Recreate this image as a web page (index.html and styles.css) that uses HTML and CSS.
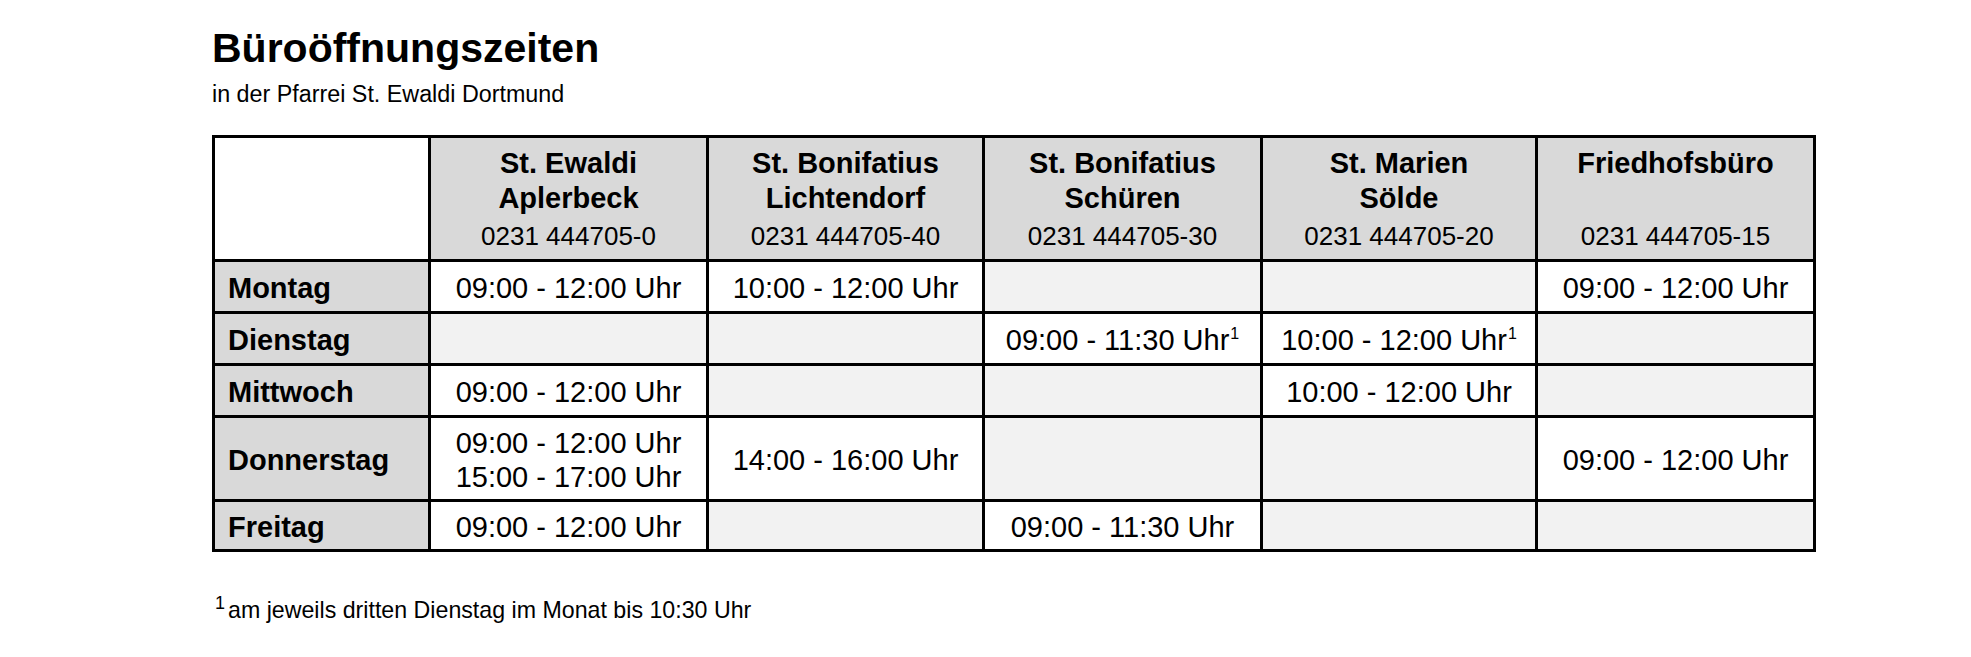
FILE: index.html
```html
<!DOCTYPE html>
<html lang="de">
<head>
<meta charset="utf-8">
<title>Büroöffnungszeiten</title>
<link rel="stylesheet" href="styles.css">
</head>
<body>
<main class="page">
  <h1 class="title">Büroöffnungszeiten</h1>
  <p class="subtitle">in der Pfarrei St. Ewaldi Dortmund</p>

  <table class="hours">
    <colgroup>
      <col class="c-day">
      <col class="c-1">
      <col class="c-2">
      <col class="c-3">
      <col class="c-4">
      <col class="c-5">
    </colgroup>
    <thead>
      <tr class="r-head">
        <th class="corner"></th>
        <th><div class="name">St. Ewaldi<br>Aplerbeck</div><div class="phone">0231 444705-0</div></th>
        <th><div class="name">St. Bonifatius<br>Lichtendorf</div><div class="phone">0231 444705-40</div></th>
        <th><div class="name">St. Bonifatius<br>Schüren</div><div class="phone">0231 444705-30</div></th>
        <th><div class="name">St. Marien<br>Sölde</div><div class="phone">0231 444705-20</div></th>
        <th><div class="name">Friedhofsbüro</div><div class="phone">0231 444705-15</div></th>
      </tr>
    </thead>
    <tbody>
      <tr class="r-std">
        <th class="day">Montag</th>
        <td class="open">09:00 - 12:00 Uhr</td>
        <td class="open">10:00 - 12:00 Uhr</td>
        <td class="closed"></td>
        <td class="closed"></td>
        <td class="open">09:00 - 12:00 Uhr</td>
      </tr>
      <tr class="r-std">
        <th class="day">Dienstag</th>
        <td class="closed"></td>
        <td class="closed"></td>
        <td class="open">09:00 - 11:30 Uhr<sup class="note">1</sup></td>
        <td class="open">10:00 - 12:00 Uhr<sup class="note">1</sup></td>
        <td class="closed"></td>
      </tr>
      <tr class="r-std">
        <th class="day">Mittwoch</th>
        <td class="open">09:00 - 12:00 Uhr</td>
        <td class="closed"></td>
        <td class="closed"></td>
        <td class="open">10:00 - 12:00 Uhr</td>
        <td class="closed"></td>
      </tr>
      <tr class="r-tall">
        <th class="day">Donnerstag</th>
        <td class="open">09:00 - 12:00 Uhr<br>15:00 - 17:00 Uhr</td>
        <td class="open">14:00 - 16:00 Uhr</td>
        <td class="closed"></td>
        <td class="closed"></td>
        <td class="open">09:00 - 12:00 Uhr</td>
      </tr>
      <tr class="r-last">
        <th class="day">Freitag</th>
        <td class="open">09:00 - 12:00 Uhr</td>
        <td class="closed"></td>
        <td class="open">09:00 - 11:30 Uhr</td>
        <td class="closed"></td>
        <td class="closed"></td>
      </tr>
    </tbody>
  </table>

  <p class="footnote"><sup class="fn-mark">1</sup>am jeweils dritten Dienstag im Monat bis 10:30 Uhr</p>
</main>
</body>
</html>
```

FILE: styles.css
```css
* {
  box-sizing: border-box;
}

html, body {
  margin: 0;
  padding: 0;
  background: #ffffff;
}

body {
  font-family: "Liberation Sans", Arial, Helvetica, sans-serif;
  color: #000000;
}

.page {
  padding: 25px 0 0 212px;
}

.title {
  margin: 0;
  font-size: 41px;
  line-height: 47px;
  font-weight: bold;
}

.subtitle {
  margin: 9px 0 0 0;
  font-size: 23.3px;
  line-height: 26px;
}

.hours {
  margin-top: 28px;
  width: 1604px;
  table-layout: fixed;
  border-collapse: separate;
  border-spacing: 0;
  border-top: 3px solid #000;
  border-left: 3px solid #000;
}

.c-day { width: 216px; }
.c-1 { width: 278px; }
.c-2 { width: 276px; }
.c-3 { width: 278px; }
.c-4 { width: 275px; }
.c-5 { width: 278px; }

.hours th,
.hours td {
  border-right: 3px solid #000;
  border-bottom: 3px solid #000;
  padding: 0;
  font-size: 29px;
  line-height: 34px;
}

.r-head th {
  height: 124px;
  background: #d9d9d9;
  vertical-align: top;
  text-align: center;
  padding-top: 8px;
  font-weight: bold;
}

.r-head th.corner {
  background: #ffffff;
}

.name {
  min-height: 70px;
  line-height: 35px;
}

.phone {
  font-weight: normal;
  font-size: 26px;
  line-height: 40px;
}

.r-std th,
.r-std td {
  height: 52px;
}

.r-tall th,
.r-tall td {
  height: 84px;
}

.r-last th,
.r-last td {
  height: 50px;
}

.hours td {
  text-align: center;
  vertical-align: middle;
  padding-top: 3px;
}

.hours th.day {
  background: #d9d9d9;
  text-align: left;
  vertical-align: middle;
  padding-left: 13px;
  padding-top: 3px;
  font-weight: bold;
}

.open {
  background: #ffffff;
}

.closed {
  background: #f2f2f2;
}

.note {
  font-size: 16px;
  line-height: 0;
  vertical-align: 11px;
  margin-left: 1px;
}

.footnote {
  margin: 44px 0 0 3px;
  font-size: 23.2px;
  line-height: 28px;
}

.fn-mark {
  font-size: 18px;
  line-height: 0;
  vertical-align: 9px;
  margin-right: 3px;
}
```
